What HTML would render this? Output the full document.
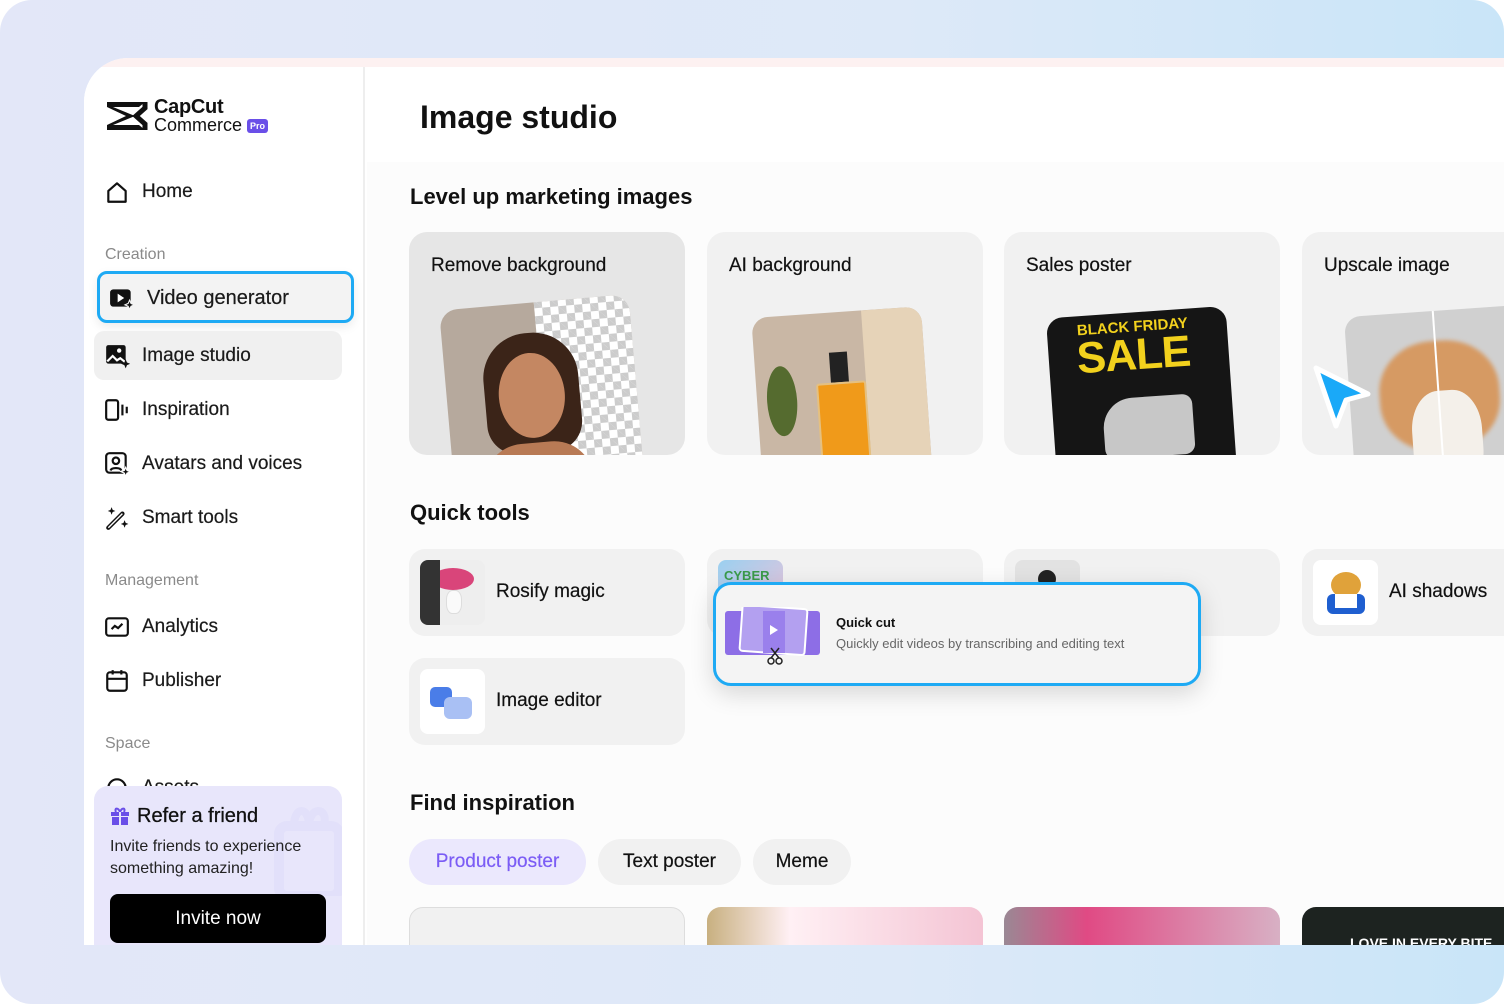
<!DOCTYPE html>
<html><head><meta charset="utf-8"><style>
*{box-sizing:border-box;margin:0;padding:0}
body{width:1504px;height:1004px;background:#fff;font-family:"Liberation Sans",sans-serif;overflow:hidden;position:relative;color:#111}
.outer{position:absolute;left:0;top:0;width:1504px;height:1004px;border-radius:32px;background:linear-gradient(90deg,#e3e7f8 0%,#dde9f8 60%,#c9e5f8 100%);overflow:hidden}
.panel{position:absolute;left:84px;top:58px;width:1440px;height:887px;background:#fff;border-top-left-radius:44px;overflow:hidden}
.strip{position:absolute;left:0;top:0;right:0;height:9px;background:#fdf1f1}
.side{position:absolute;left:0;top:9px;width:281px;height:900px;border-right:2px solid #eee;background:#fff}
.a{position:absolute}
.nav{position:absolute;left:20px;font-size:19px;color:#1a1a1a;display:flex;align-items:center;gap:12px;-webkit-text-stroke:.2px #1a1a1a}
.lbl{position:absolute;left:21px;font-size:16px;color:#8a8a8a}
.main{position:absolute;left:283px;top:9px;right:0;bottom:0;background:#fcfcfc}
.h2{position:absolute;left:43px;font-size:22px;font-weight:bold;color:#111}
.card{position:absolute;width:276px;height:223px;border-radius:18px;background:#f1f1f1;overflow:hidden}
.card .t{position:absolute;left:22px;top:23px;font-size:19px;color:#111;-webkit-text-stroke:.2px #111}
.tool{position:absolute;width:276px;height:87px;border-radius:16px;background:#f1f1f1;overflow:hidden}
.tool .th{position:absolute;left:11px;top:11px;width:65px;height:65px;border-radius:8px;background:#fff;overflow:hidden}
.tool .t{position:absolute;left:87px;top:32px;font-size:19px;color:#111;-webkit-text-stroke:.2px #111}
.chip{position:absolute;top:772px;height:46px;border-radius:23px;background:#f1f1f1;font-size:19px;line-height:46px;text-align:center;-webkit-text-stroke:.2px currentColor}
.pic{position:absolute;top:840px;width:276px;height:80px;border-radius:14px;overflow:hidden}
</style></head><body>
<div class="outer">
<div class="panel">
<div class="strip"></div>
<div class="side">
  <svg class="a" style="left:20px;top:32px" width="44" height="34" viewBox="0 0 44 34"><path d="M3 3h38l-6 5H9l22 9-22 9h26l6 5H3v-5l19-9-19-9z" fill="#111"/><path d="M41 3v6l-9 8 9 8v6" fill="none" stroke="#111" stroke-width="5"/></svg>
  <div class="a" style="left:70px;top:29px;font-size:20px;font-weight:bold;letter-spacing:-.3px">CapCut</div>
  <div class="a" style="left:70px;top:48px;font-size:18px">Commerce</div>
  <div class="a" style="left:163px;top:52px;width:21px;height:14px;background:#6a4fe8;color:#fff;font-size:9px;font-weight:bold;border-radius:3px;text-align:center;line-height:14px">Pro</div>

  <div class="nav" style="top:112px"><svg width="26" height="26" viewBox="0 0 24 24"><path d="M4 11l8-7 8 7v10H4z" fill="none" stroke="#111" stroke-width="2" stroke-linejoin="round"/></svg>Home</div>
  <div class="lbl" style="top:179px">Creation</div>
  <div class="a" style="left:13px;top:204px;width:257px;height:52px;border:3px solid #1eaaf4;border-radius:10px;background:#f3f3f3;box-shadow:0 4px 10px rgba(0,0,0,.08)"></div>
  <div class="nav" style="top:219px;left:25px"><svg width="26" height="24" viewBox="0 0 24 22"><rect x="1" y="3" width="19" height="16" rx="3" fill="#111"/><path d="M8 7l6 4-6 4z" fill="#fff"/><path d="M19 13l1.3 3 3 1.3-3 1.3-1.3 3-1.3-3-3-1.3 3-1.3z" fill="#111" stroke="#f3f3f3"/></svg><span style="font-size:20px">Video generator</span></div>
  <div class="a" style="left:10px;top:264px;width:248px;height:49px;border-radius:10px;background:#f0f0f0"></div>
  <div class="nav" style="top:276px"><svg width="26" height="26" viewBox="0 0 24 24"><rect x="2" y="2" width="18" height="17" rx="2" fill="#111"/><circle cx="14" cy="7" r="2" fill="#fff"/><path d="M3 17l5-5 4 4 3-2 5 4" fill="none" stroke="#fff" stroke-width="2"/><path d="M20 15l1.2 3 3 1.2-3 1.2-1.2 3-1.2-3-3-1.2 3-1.2z" fill="#111"/></svg>Image studio</div>
  <div class="nav" style="top:330px"><svg width="26" height="26" viewBox="0 0 24 24"><rect x="2" y="3" width="11" height="18" rx="2" fill="none" stroke="#111" stroke-width="2"/><path d="M17 7v10M21 9v6" stroke="#111" stroke-width="2"/></svg>Inspiration</div>
  <div class="nav" style="top:384px"><svg width="26" height="26" viewBox="0 0 24 24"><rect x="2" y="2" width="18" height="18" rx="3" fill="none" stroke="#111" stroke-width="2"/><circle cx="11" cy="9" r="3" fill="none" stroke="#111" stroke-width="2"/><path d="M6 18c1-3 9-3 10 0" fill="none" stroke="#111" stroke-width="2"/><path d="M20 15l1.2 3 3 1.2-3 1.2-1.2 3-1.2-3-3-1.2 3-1.2z" fill="#111" stroke="#fff"/></svg>Avatars and voices</div>
  <div class="nav" style="top:438px"><svg width="26" height="26" viewBox="0 0 24 24"><path d="M4 21L17 8" stroke="#111" stroke-width="4" stroke-linecap="round"/><path d="M4 21L17 8" stroke="#fff" stroke-width="1.3"/><path d="M7 2l1 2.5 2.5 1-2.5 1L7 9 6 6.5 3.5 5.5 6 4.5zM19 14l1 2.5 2.5 1-2.5 1-1 2.5-1-2.5-2.5-1 2.5-1z" fill="#111"/></svg>Smart tools</div>
  <div class="lbl" style="top:505px">Management</div>
  <div class="nav" style="top:547px"><svg width="26" height="26" viewBox="0 0 24 24"><rect x="2" y="4" width="20" height="16" rx="2.5" fill="none" stroke="#111" stroke-width="2"/><path d="M7 14l3-3 3 2 4-4" fill="none" stroke="#111" stroke-width="2"/></svg>Analytics</div>
  <div class="nav" style="top:601px"><svg width="26" height="26" viewBox="0 0 24 24"><rect x="3" y="4" width="18" height="17" rx="2.5" fill="none" stroke="#111" stroke-width="2"/><path d="M3 10h18M8 2v4M16 2v4" stroke="#111" stroke-width="2"/></svg>Publisher</div>
  <div class="lbl" style="top:668px">Space</div>
  <div class="nav" style="top:708px"><svg width="26" height="26" viewBox="0 0 24 24"><circle cx="12" cy="12" r="8" fill="none" stroke="#111" stroke-width="2"/></svg>Assets</div>
  <div class="a" style="left:10px;top:719px;width:248px;height:180px;border-radius:14px;background:#e8e6fb;overflow:hidden">
    <svg class="a" style="left:180px;top:10px" width="70" height="100" viewBox="0 0 70 100"><rect x="5" y="30" width="60" height="70" rx="8" fill="none" stroke="#e2e0fa" stroke-width="10"/><path d="M20 30c0-20 15-20 15 0c0-20 20-20 15 0" fill="none" stroke="#e2e0fa" stroke-width="8"/></svg>
    <svg class="a" style="left:16px;top:20px" width="20" height="20" viewBox="0 0 20 20"><rect x="1" y="6" width="18" height="4" fill="#6a4fe8"/><rect x="2" y="11" width="16" height="8" fill="#6a4fe8"/><path d="M10 6C8 1 4 2 6 6M10 6c2-5 6-4 4 0" fill="none" stroke="#6a4fe8" stroke-width="2"/><rect x="9" y="6" width="2" height="13" fill="#e8e6fb"/></svg>
    <div class="a" style="left:43px;top:19px;font-size:20px;color:#111;-webkit-text-stroke:.3px #111">Refer a friend</div>
    <div class="a" style="left:16px;top:50px;font-size:16px;line-height:22px;color:#222">Invite friends to experience<br>something amazing!</div>
    <div class="a" style="left:16px;top:108px;width:216px;height:49px;border-radius:8px;background:#000;color:#fff;font-size:19px;text-align:center;line-height:49px">Invite now</div>
  </div>
</div>
<div class="main">
  <div class="a" style="left:0;top:0;right:0;height:95px;background:#fff"></div>
  <div class="a" style="left:53px;top:32px;font-size:32px;font-weight:bold;color:#111">Image studio</div>
  <div class="h2" style="top:117px">Level up marketing images</div>

  <div class="card" style="left:42px;top:165px;background:#e6e6e6"><div class="t">Remove background</div>
    <div class="a" style="left:38px;top:70px;width:190px;height:190px;border-radius:18px;background:#b6a99d;transform:rotate(-5deg);overflow:hidden">
      <div class="a" style="left:95px;top:-10px;width:110px;height:220px;background-color:#fff;background-image:linear-gradient(45deg,#ccc 25%,transparent 25%,transparent 75%,#ccc 75%),linear-gradient(45deg,#ccc 25%,transparent 25%,transparent 75%,#ccc 75%);background-size:16px 16px;background-position:0 0,8px 8px"></div>
      <div class="a" style="left:38px;top:30px;width:95px;height:120px;border-radius:45px 45px 30px 30px;background:#3b2418"></div>
      <div class="a" style="left:52px;top:50px;width:66px;height:85px;border-radius:50%;background:#c48762"></div>
      <div class="a" style="left:30px;top:140px;width:110px;height:60px;border-radius:40px 40px 0 0;background:#b87a55"></div>
    </div></div>
  <div class="card" style="left:340px;top:165px"><div class="t">AI background</div>
    <div class="a" style="left:50px;top:80px;width:170px;height:170px;border-radius:16px;background:#c9b7a5;transform:rotate(-4deg);overflow:hidden">
      <div class="a" style="left:110px;top:0;width:60px;height:170px;background:#e6d3b8"></div>
      <div class="a" style="left:10px;top:50px;width:30px;height:70px;background:#556b2f;border-radius:50%"></div>
      <div class="a" style="left:75px;top:40px;width:18px;height:30px;background:#222"></div>
      <div class="a" style="left:60px;top:70px;width:50px;height:90px;background:#f09a1a;border:2px solid #e5c080;border-radius:3px"></div>
    </div></div>
  <div class="card" style="left:637px;top:165px"><div class="t">Sales poster</div>
    <div class="a" style="left:48px;top:80px;width:180px;height:180px;border-radius:16px;background:#151515;transform:rotate(-4deg);overflow:hidden">
      <div class="a" style="left:30px;top:6px;color:#f2d11d;font-weight:bold;font-size:15px">BLACK FRIDAY</div>
      <div class="a" style="left:28px;top:18px;color:#f2d11d;font-weight:bold;font-size:44px;letter-spacing:-1px">SALE</div>
      <div class="a" style="left:50px;top:85px;width:90px;height:60px;border-radius:30px 10px 10px 10px;background:#c7c7c7"></div>
    </div></div>
  <div class="card" style="left:935px;top:165px"><div class="t">Upscale image</div>
    <div class="a" style="left:48px;top:78px;width:200px;height:180px;border-radius:16px;background:#d0d0d0;transform:rotate(-4deg);overflow:hidden">
      <div class="a" style="left:30px;top:30px;width:120px;height:110px;border-radius:45%;background:#d69a63;filter:blur(2px)"></div>
      <div class="a" style="left:60px;top:80px;width:70px;height:100px;border-radius:40%;background:#f4f0ea"></div>
      <div class="a" style="left:88px;top:0;width:2px;height:180px;background:#fff"></div>
    </div>
    <svg class="a" style="left:6px;top:130px" width="65" height="72" viewBox="0 0 65 72"><path d="M8 6l52 26-22 6-10 26z" fill="#1aa9f8" stroke="#fff" stroke-width="5" stroke-linejoin="round"/></svg>
  </div>

  <div class="h2" style="top:433px">Quick tools</div>
  <div class="tool" style="left:42px;top:482px"><div class="th" style="background:#eee"><div class="a" style="left:12px;top:8px;width:42px;height:22px;border-radius:50%;background:#d9457a"></div><div class="a" style="left:26px;top:30px;width:16px;height:24px;border-radius:40%;background:#fafafa;border:1px solid #ddd"></div><div class="a" style="left:0;top:0;width:20px;height:65px;background:#333"></div></div><div class="t">Rosify magic</div></div>
  <div class="tool" style="left:340px;top:482px"><div class="th" style="background:linear-gradient(135deg,#9ad0f0,#f3c1d7)"><div class="a" style="left:6px;top:8px;font-size:13px;font-weight:bold;color:#3a9a4a">CYBER</div></div></div>
  <div class="tool" style="left:637px;top:482px"><div class="th" style="background:#e2e2e2"><div class="a" style="left:23px;top:10px;width:18px;height:18px;border-radius:50%;background:#222"></div></div></div>
  <div class="tool" style="left:935px;top:482px"><div class="th"><div class="a" style="left:18px;top:12px;width:30px;height:26px;border-radius:50%;background:#e0a23a"></div><div class="a" style="left:14px;top:34px;width:38px;height:20px;border-radius:6px;background:#1f5fd0"></div><div class="a" style="left:22px;top:34px;width:22px;height:14px;background:#fff"></div></div><div class="t" style="left:87px">AI shadows</div></div>
  <div class="tool" style="left:42px;top:591px"><div class="th"><div class="a" style="left:10px;top:18px;width:22px;height:20px;border-radius:5px;background:#4a7de8"></div><div class="a" style="left:24px;top:28px;width:28px;height:22px;border-radius:6px;background:#a9c0f4"></div></div><div class="t">Image editor</div></div>

  <div class="a" style="left:346px;top:515px;width:488px;height:104px;border:3px solid #1eaaf4;border-radius:18px;background:#f4f4f4;box-shadow:0 8px 24px rgba(0,0,0,.15)">
    <svg class="a" style="left:7px;top:22px" width="100" height="60" viewBox="0 0 100 60"><rect x="2" y="4" width="95" height="44" rx="3" fill="#8d6ee6"/><rect x="18" y="0" width="65" height="46" rx="3" fill="#b3a0f0" stroke="#fff" stroke-width="2" transform="rotate(4 50 23)"/><rect x="40" y="4" width="22" height="42" fill="#9a80ec"/><path d="M47 18l8 5-8 5z" fill="#fff"/><circle cx="48" cy="54" r="3" fill="none" stroke="#222" stroke-width="1.5"/><circle cx="56" cy="54" r="3" fill="none" stroke="#222" stroke-width="1.5"/><path d="M48 51l8-10M56 51l-8-10" stroke="#222" stroke-width="1.5"/></svg>
    <div class="a" style="left:120px;top:30px;font-size:13px;font-weight:bold;color:#111">Quick cut</div>
    <div class="a" style="left:120px;top:51px;font-size:13px;color:#666">Quickly edit videos by transcribing and editing text</div>
  </div>

  <div class="h2" style="top:723px">Find inspiration</div>
  <div class="chip" style="left:42px;width:177px;background:#ebe8fd;color:#7b5cf5">Product poster</div>
  <div class="chip" style="left:231px;width:143px">Text poster</div>
  <div class="chip" style="left:386px;width:98px">Meme</div>
  <div class="pic" style="left:42px;background:#f1f1f1;border:1px solid #ddd"></div>
  <div class="pic" style="left:340px;background:linear-gradient(90deg,#c8b080,#fff0f4 30%,#f4c4d4)"></div>
  <div class="pic" style="left:637px;background:linear-gradient(90deg,#9a8894,#e04a84 30%,#d8b0c4)"></div>
  <div class="pic" style="left:935px;background:#1d2320;color:#fff;font-weight:bold;font-size:14px;padding:28px 0 0 48px">LOVE IN EVERY BITE</div>
</div>
</div>
</div>
</body></html>
